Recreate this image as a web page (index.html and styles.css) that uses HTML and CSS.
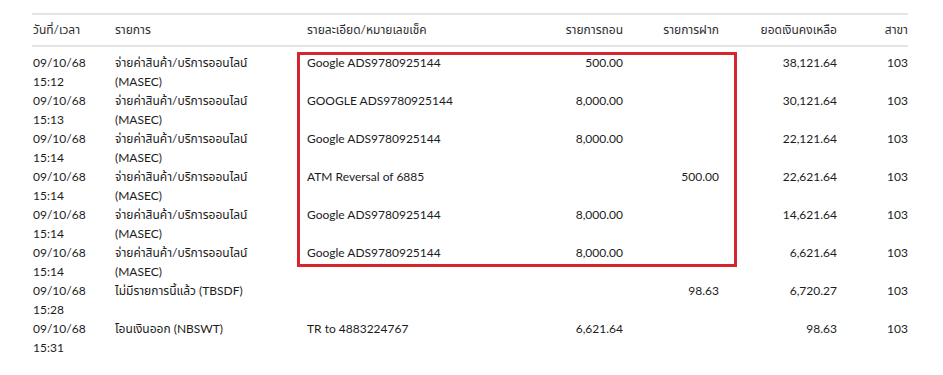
FILE: index.html
```html
<!DOCTYPE html>
<html lang="th">
<head>
<meta charset="utf-8">
<link rel="stylesheet" href="styles.css">
</head>
<body>
<div class="statement">
  <table class="tx">
    <colgroup>
      <col class="c-date"><col class="c-item"><col class="c-detail"><col class="c-wd"><col class="c-dep"><col class="c-bal"><col class="c-br">
    </colgroup>
    <thead>
      <tr>
        <th>วันที่/เวลา</th>
        <th>รายการ</th>
        <th>รายละเอียด/หมายเลขเช็ค</th>
        <th class="num">รายการถอน</th>
        <th class="num">รายการฝาก</th>
        <th class="num">ยอดเงินคงเหลือ</th>
        <th class="num">สาขา</th>
      </tr>
    </thead>
    <tbody>
      <tr class="first">
        <td>09/10/68<br>15:12</td>
        <td>จ่ายค่าสินค้า/บริการออนไลน์<br>(MASEC)</td>
        <td>Google ADS9780925144</td>
        <td class="num">500.00</td>
        <td class="num"></td>
        <td class="num">38,121.64</td>
        <td class="num">103</td>
      </tr>
      <tr>
        <td>09/10/68<br>15:13</td>
        <td>จ่ายค่าสินค้า/บริการออนไลน์<br>(MASEC)</td>
        <td>GOOGLE ADS9780925144</td>
        <td class="num">8,000.00</td>
        <td class="num"></td>
        <td class="num">30,121.64</td>
        <td class="num">103</td>
      </tr>
      <tr>
        <td>09/10/68<br>15:14</td>
        <td>จ่ายค่าสินค้า/บริการออนไลน์<br>(MASEC)</td>
        <td>Google ADS9780925144</td>
        <td class="num">8,000.00</td>
        <td class="num"></td>
        <td class="num">22,121.64</td>
        <td class="num">103</td>
      </tr>
      <tr>
        <td>09/10/68<br>15:14</td>
        <td>จ่ายค่าสินค้า/บริการออนไลน์<br>(MASEC)</td>
        <td>ATM Reversal of 6885</td>
        <td class="num"></td>
        <td class="num">500.00</td>
        <td class="num">22,621.64</td>
        <td class="num">103</td>
      </tr>
      <tr>
        <td>09/10/68<br>15:14</td>
        <td>จ่ายค่าสินค้า/บริการออนไลน์<br>(MASEC)</td>
        <td>Google ADS9780925144</td>
        <td class="num">8,000.00</td>
        <td class="num"></td>
        <td class="num">14,621.64</td>
        <td class="num">103</td>
      </tr>
      <tr>
        <td>09/10/68<br>15:14</td>
        <td>จ่ายค่าสินค้า/บริการออนไลน์<br>(MASEC)</td>
        <td>Google ADS9780925144</td>
        <td class="num">8,000.00</td>
        <td class="num"></td>
        <td class="num">6,621.64</td>
        <td class="num">103</td>
      </tr>
      <tr>
        <td>09/10/68<br>15:28</td>
        <td>ไม่มีรายการนี้แล้ว (TBSDF)</td>
        <td></td>
        <td class="num"></td>
        <td class="num">98.63</td>
        <td class="num">6,720.27</td>
        <td class="num">103</td>
      </tr>
      <tr>
        <td>09/10/68<br>15:31</td>
        <td>โอนเงินออก (NBSWT)</td>
        <td>TR to 4883224767</td>
        <td class="num">6,621.64</td>
        <td class="num"></td>
        <td class="num">98.63</td>
        <td class="num">103</td>
      </tr>
    </tbody>
  </table>
  <div class="highlight"></div>
</div>
</body>
</html>
```

FILE: styles.css
```css
html, body {
  margin: 0;
  padding: 0;
  background: #ffffff;
}

body {
  font-family: "Lato", "Noto Sans Thai", "Noto Sans", sans-serif;
  font-size: 12px;
  color: #1c1c1c;
}

.statement {
  position: relative;
  padding: 13px 0 0 32px;
  width: 876px;
}

.tx {
  width: 876px;
  table-layout: fixed;
  border-collapse: collapse;
}

.c-date { width: 82px; }
.c-item { width: 192px; }
.c-detail { width: 200px; }
.c-wd { width: 117px; }
.c-dep { width: 96px; }
.c-bal { width: 118px; }
.c-br { width: 71px; }

.tx thead tr {
  border-top: 2px solid #e4e4e4;
  border-bottom: 2px solid #e4e4e4;
}

.tx th {
  height: 30px;
  padding: 0 0 0 1px;
  font-weight: normal;
  text-align: left;
  color: #2d2d2d;
  vertical-align: middle;
}

.tx td {
  padding: 0 0 0 1px;
  line-height: 19px;
  vertical-align: top;
  white-space: nowrap;
}

.tx tr.first td {
  padding-top: 6px;
}

.tx .num {
  text-align: right;
  padding-left: 0;
}

.highlight {
  position: absolute;
  left: 297px;
  top: 52px;
  width: 434px;
  height: 209px;
  border: 3px solid #d6262d;
}
```
